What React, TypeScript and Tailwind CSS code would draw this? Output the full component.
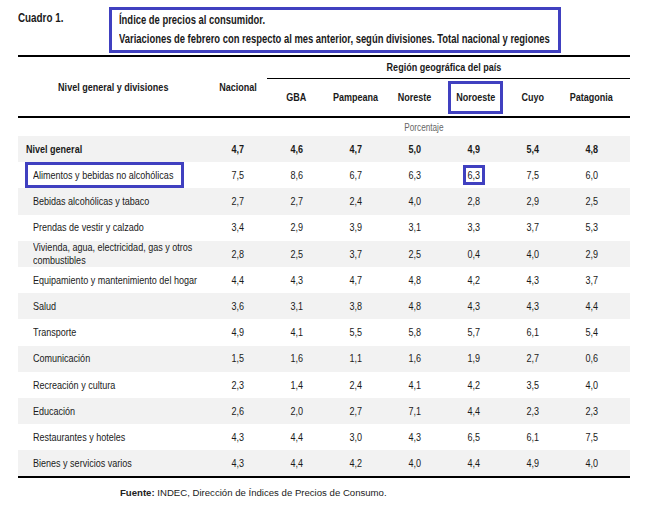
import React from "react";

const rows: { label: string; vals: string[]; bold?: boolean; box?: boolean; two?: boolean }[] = [
  { label: "Nivel general", vals: ["4,7", "4,6", "4,7", "5,0", "4,9", "5,4", "4,8"], bold: true },
  { label: "Alimentos y bebidas no alcohólicas", vals: ["7,5", "8,6", "6,7", "6,3", "6,3", "7,5", "6,0"], box: true },
  { label: "Bebidas alcohólicas y tabaco", vals: ["2,7", "2,7", "2,4", "4,0", "2,8", "2,9", "2,5"] },
  { label: "Prendas de vestir y calzado", vals: ["3,4", "2,9", "3,9", "3,1", "3,3", "3,7", "5,3"] },
  { label: "Vivienda, agua, electricidad, gas y otros", vals: ["2,8", "2,5", "3,7", "2,5", "0,4", "4,0", "2,9"], two: true },
  { label: "Equipamiento y mantenimiento del hogar", vals: ["4,4", "4,3", "4,7", "4,8", "4,2", "4,3", "3,7"] },
  { label: "Salud", vals: ["3,6", "3,1", "3,8", "4,8", "4,3", "4,3", "4,4"] },
  { label: "Transporte", vals: ["4,9", "4,1", "5,5", "5,8", "5,7", "6,1", "5,4"] },
  { label: "Comunicación", vals: ["1,5", "1,6", "1,1", "1,6", "1,9", "2,7", "0,6"] },
  { label: "Recreación y cultura", vals: ["2,3", "1,4", "2,4", "4,1", "4,2", "3,5", "4,0"] },
  { label: "Educación", vals: ["2,6", "2,0", "2,7", "7,1", "4,4", "2,3", "2,3"] },
  { label: "Restaurantes y hoteles", vals: ["4,3", "4,4", "3,0", "4,3", "6,5", "6,1", "7,5"] },
  { label: "Bienes y servicios varios", vals: ["4,3", "4,4", "4,2", "4,0", "4,4", "4,9", "4,0"] },
];

const regions = ["GBA", "Pampeana", "Noreste", "Noroeste", "Cuyo", "Patagonia"];

// Narrow (condensed) text: Arial Narrow is not installed, so Liberation Sans is condensed horizontally.
function N({ children, left }: { children: React.ReactNode; left?: boolean }) {
  return (
    <span className={`inline-block whitespace-nowrap scale-x-[0.82] ${left ? "origin-left" : "origin-center"}`}>
      {children}
    </span>
  );
}

const COLS = "grid grid-cols-[190px_repeat(6,59px)_68px]";

export default function App() {
  return (
    <div
      className="w-[646px] h-[516px] bg-white text-[#1a1a1a] overflow-hidden"
      style={{ fontFamily: '"Liberation Sans", Arial, sans-serif' }}
    >
      {/* Title */}
      <div className="flex items-start pl-[18px] pt-[7px]">
        <div className="w-[91px] pt-[4px] text-[12px] font-bold leading-[14px]">
          <N left>Cuadro 1.</N>
        </div>
        <div className="w-[452px] h-[46px] border-[3px] border-[#4040c0] pl-[7px] pt-[1px] text-[12px] font-bold leading-[19px]">
          <div>
            <span className="inline-block whitespace-nowrap scale-x-[0.785] origin-left">Índice de precios al consumidor.</span>
          </div>
          <div>
            <span className="inline-block whitespace-nowrap scale-x-[0.785] origin-left">
              Variaciones de febrero con respecto al mes anterior, según divisiones. Total nacional y regiones
            </span>
          </div>
        </div>
      </div>

      {/* Table */}
      <div className="ml-[18px] w-[612px] mt-[2px]">
        {/* header */}
        <div className={`${COLS} grid-rows-[22px_37px] border-t-2 border-b-2 border-black text-[11px] font-bold`}>
          <div className="row-span-2 flex items-center justify-center pt-[1px]">
            <N>Nivel general y divisiones</N>
          </div>
          <div className="row-span-2 flex items-center justify-center pt-[1px]">
            <N>Nacional</N>
          </div>
          <div className="col-span-6 flex items-center justify-center border-b-[1.5px] border-black pr-[9px]">
            <N>Región geográfica del país</N>
          </div>
          {regions.map((r) => (
            <div key={r} className={`flex items-center justify-center ${r === "Patagonia" ? "pr-[9px]" : ""}`}>
              {r === "Noroeste" ? (
                <span className="flex h-[33px] w-[59px] items-center justify-center border-[3px] border-[#4040c0] ml-[4px]">
                  <N>{r}</N>
                </span>
              ) : (
                <N>{r}</N>
              )}
            </div>
          ))}
        </div>

        {/* Porcentaje */}
        <div className="grid grid-cols-[190px_1fr] h-[18px] text-[10px] text-[#666] items-center">
          <div />
          <div className="text-center pl-[10px] pt-[1px]">
            <N>Porcentaje</N>
          </div>
        </div>

        {/* body */}
        <div className="border-b-2 border-black">
          {rows.map((row, i) => (
            <div
              key={row.label}
              className={`${COLS} h-[26.2px] items-center text-[11px] ${
                i % 2 === 0 ? "bg-[#f2f2f2]" : "bg-white"
              } ${row.bold ? "font-bold" : ""}`}
            >
              <div className={row.bold ? "pl-[8px]" : row.box ? "pl-[7px]" : "pl-[15px]"}>
                {row.box ? (
                  <span className="flex h-[26px] w-[159px] items-center border-[3px] border-[#4040c0] pl-[5px]">
                    <N left>{row.label}</N>
                  </span>
                ) : row.two ? (
                  <span className="inline-block scale-x-[0.82] origin-left whitespace-nowrap leading-[13px]">
                    {row.label}
                    <br />
                    combustibles
                  </span>
                ) : (
                  <N left>{row.label}</N>
                )}
              </div>
              {row.vals.map((v, j) => (
                <div key={j} className={`flex justify-center ${j === 6 ? "pr-[9px]" : ""}`}>
                  {row.box && j === 4 ? (
                    <span className="flex h-[20px] w-[22px] items-center justify-center border-[3px] border-[#4040c0]">
                      <N>{v}</N>
                    </span>
                  ) : (
                    <N>{v}</N>
                  )}
                </div>
              ))}
            </div>
          ))}
        </div>

        {/* source */}
        <div className="pl-[102px] pt-[8px] text-[9.6px] text-[#222]">
          <span className="font-bold">Fuente:</span> INDEC, Dirección de Índices de Precios de Consumo.
        </div>
      </div>
    </div>
  );
}
